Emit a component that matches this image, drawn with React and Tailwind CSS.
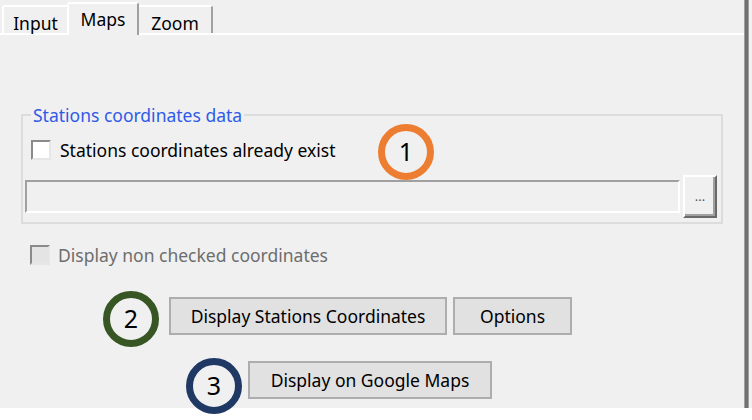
import React from "react"

const Tab = ({ label, selected, className }) => (
    <div
        className={
            selected
                ? "relative z-10 -mb-[2px] h-[33px] w-[72px] pt-[3px] text-center border-2 border-b-0 border-t-white border-l-white border-r-[#a0a0a0] rounded-t-[3px] bg-[#f0f0f0] " + className
                : "h-[28px] pt-[3px] text-center border-2 border-b-0 border-t-white border-l-white border-r-[#a0a0a0] rounded-t-[3px] bg-[#f0f0f0] " + className
        }
    >
        {label}
    </div>
)

const CheckBox = ({ disabled }) => (
    <span
        className={
            disabled
                ? "w-[20px] h-[20px] border-2 border-t-[#8a8a8a] border-l-[#8a8a8a] border-r-[#e6e6e6] border-b-[#e6e6e6] bg-[#e4e4e4]"
                : "w-[20px] h-[20px] border-2 border-t-[#8a8a8a] border-l-[#8a8a8a] border-r-[#e6e6e6] border-b-[#e6e6e6] bg-white"
        }
    />
)

const Button = ({ children, className }) => (
    <button className={"h-[38px] bg-[#e1e1e1] border-2 border-[#adadad] text-[17.5px] text-black " + className}>
        {children}
    </button>
)

const App = () => {
    return (
        <div className="w-[752px] h-[420px] bg-white font-['Noto_Sans',sans-serif] text-[17.5px] text-black overflow-hidden">
            <div className="h-[408px] bg-[#f0f0f0] flex">
                <div className="w-[744px] flex flex-col">
                    {/* tabs */}
                    <div className="h-[35px] flex items-end pl-[2px] border-b-2 border-white">
                        <Tab label="Input" className="w-[67px]" />
                        <Tab label="Maps" selected className="-ml-[2px] pt-[4px] leading-[22px]" />
                        <Tab label="Zoom" className="w-[76px] -ml-[2px]" />
                    </div>

                    {/* group box */}
                    <fieldset className="ml-[21px] mt-[68px] w-[702px] border-2 border-[#dcdcdc] pb-[4px]">
                        <legend className="ml-[8px] px-[2px] leading-[24px] text-[#2f5ae8]">
                            Stations coordinates data
                        </legend>
                        <div className="relative mt-[11px] ml-[8px] h-[24px] flex items-center gap-[9px]">
                            <CheckBox />
                            <span className="leading-[24px]">Stations coordinates already exist</span>
                            <div className="absolute left-[347px] -top-[14px] w-[56px] h-[56px] rounded-full border-[7px] border-[#ed7d31] flex items-center justify-center text-[25px]">
                                1
                            </div>
                        </div>
                        <div className="mt-[13px] pl-[2px] pr-[4px] flex items-center gap-[3px]">
                            <div className="flex-1 h-[33px] border-2 border-t-[#a0a0a0] border-l-[#a0a0a0] border-r-white border-b-white bg-[#f0f0f0]" />
                            <button className="w-[34px] h-[43px] border-2 border-t-white border-l-white border-r-[#696969] border-b-[#696969] shadow-[inset_-2px_-2px_0_#a0a0a0] bg-[#f0f0f0] text-[13px] text-[#555]">
                                ...
                            </button>
                        </div>
                    </fieldset>

                    {/* disabled option */}
                    <div className="mt-[19px] ml-[30px] h-[24px] flex items-center gap-[8px] text-[#6d6d6d]">
                        <CheckBox disabled />
                        <span className="leading-[24px]">Display non checked coordinates</span>
                    </div>

                    {/* actions */}
                    <div className="mt-[30px] ml-[103px] flex items-start">
                        <div className="-mt-[6px] -mb-[12px] w-[56px] h-[56px] rounded-full border-[7px] border-[#375623] flex items-center justify-center text-[25px]">
                            2
                        </div>
                        <Button className="ml-[10px] w-[278px]">Display Stations Coordinates</Button>
                        <Button className="ml-[6px] w-[119px]">Options</Button>
                    </div>
                    <div className="mt-[26px] ml-[186px] flex items-start">
                        <div className="-mt-[3px] -mb-[15px] w-[56px] h-[56px] rounded-full border-[7px] border-[#1f3864] flex items-center justify-center text-[25px]">
                            3
                        </div>
                        <Button className="ml-[6px] w-[244px]">Display on Google Maps</Button>
                    </div>
                </div>
                <div className="w-[5px] bg-[#707070] border-l border-r border-[#a0a0a0]" />
                <div className="flex-1" />
            </div>
        </div>
    )
}

export default App
